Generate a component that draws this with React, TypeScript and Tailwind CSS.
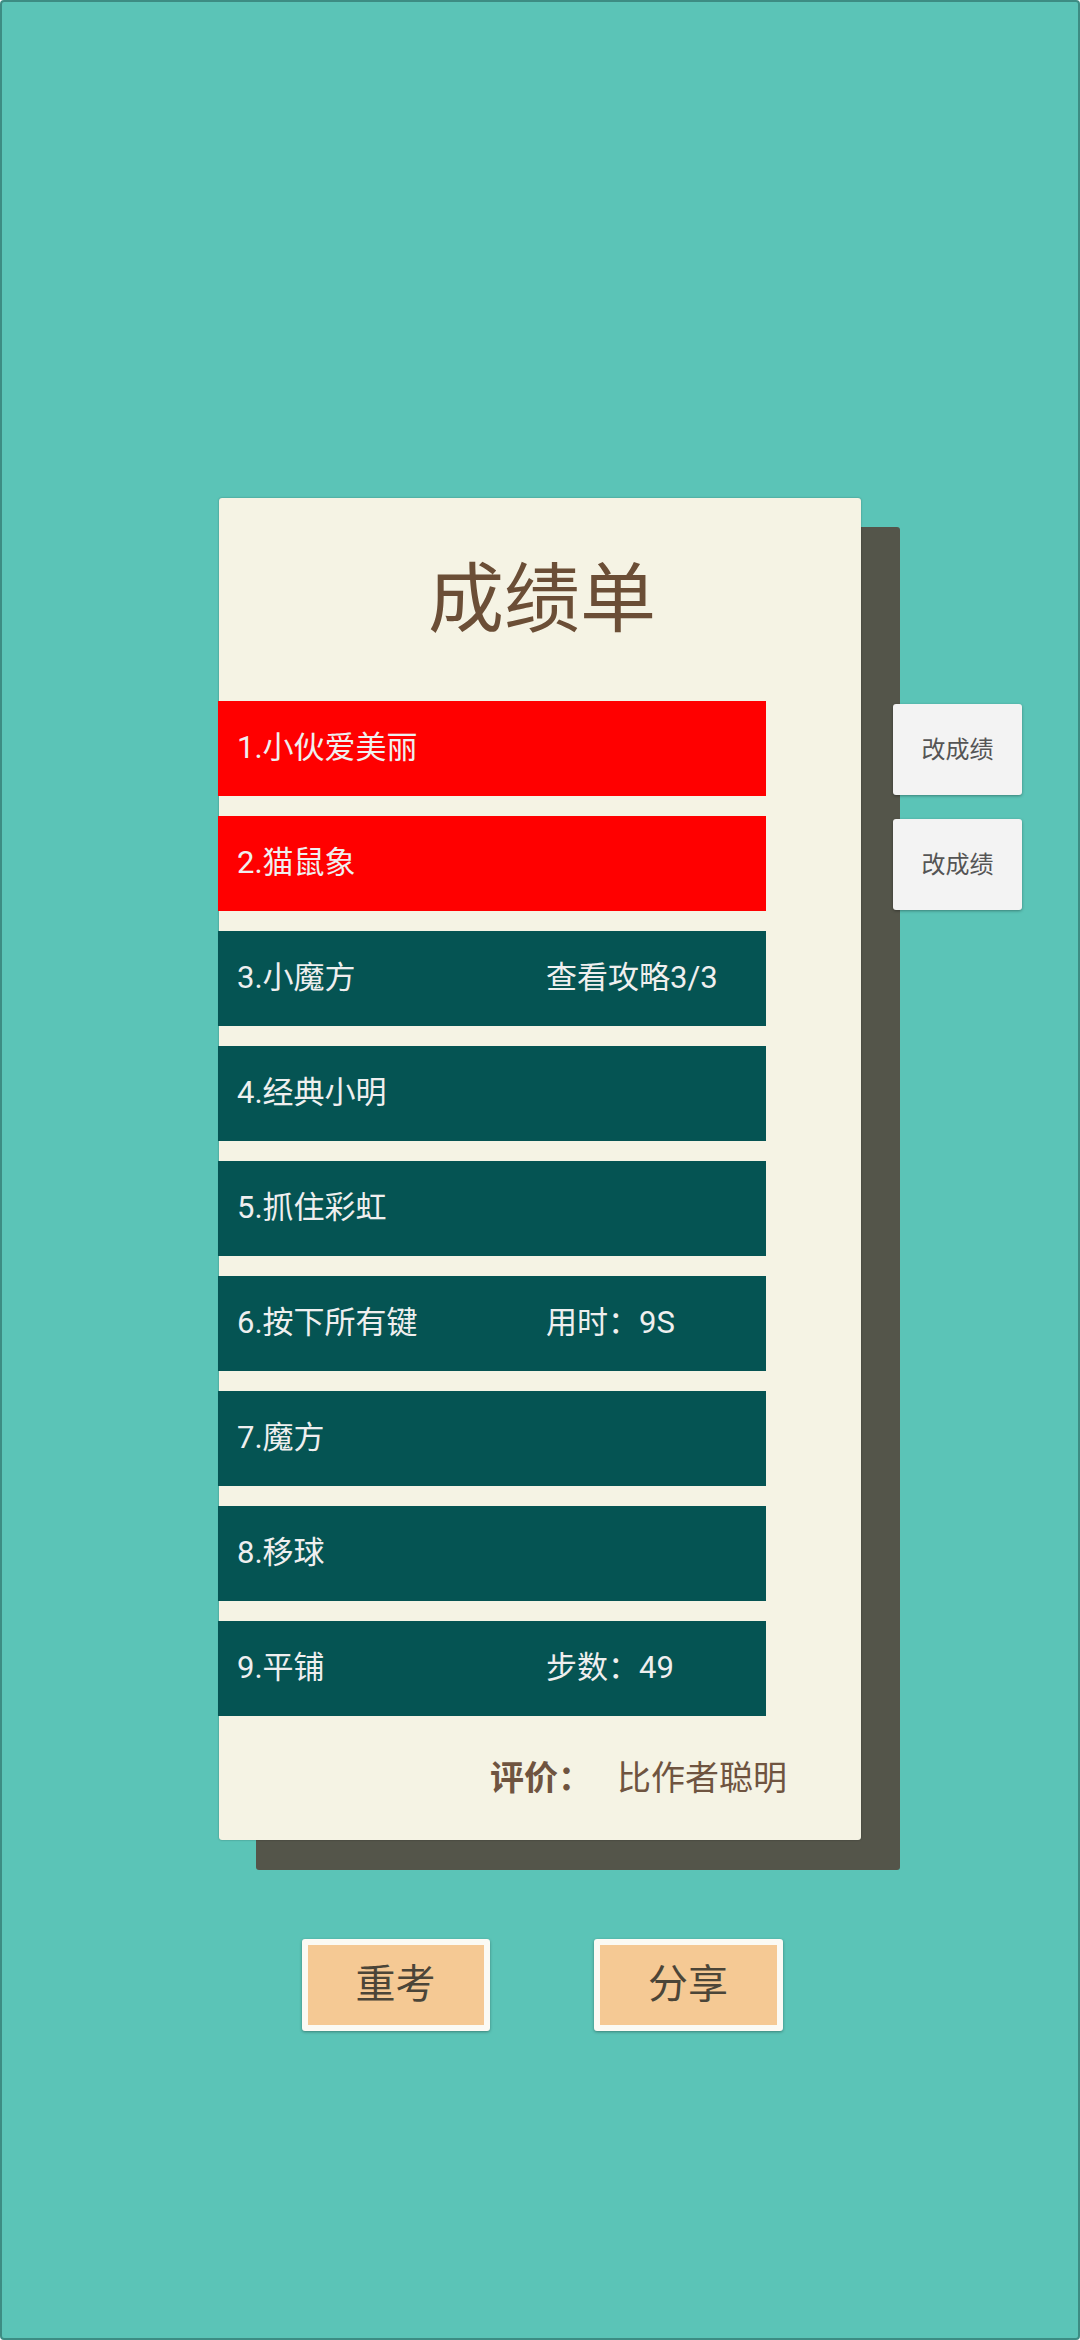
import React from 'react';

interface IRow {
  name: string;
  extra?: string;
  failed?: boolean;
}

const rows: IRow[] = [
  { name: '1.小伙爱美丽', failed: true },
  { name: '2.猫鼠象', failed: true },
  { name: '3.小魔方', extra: '查看攻略3/3' },
  { name: '4.经典小明' },
  { name: '5.抓住彩虹' },
  { name: '6.按下所有键', extra: '用时：9S' },
  { name: '7.魔方' },
  { name: '8.移球' },
  { name: '9.平铺', extra: '步数：49' },
];

const font = "font-['Roboto','Noto_Sans_CJK_SC',sans-serif]";

const ScoreRow: React.FC<IRow> = ({ name, extra, failed }) => {
  return (
    <div
      className={`flex h-[95px] w-[548px] -ml-[1px] items-center pl-[19px] text-[31px] text-[#efefef] ${
        failed ? 'bg-[#ff0000]' : 'bg-[#055453]'
      }`}
    >
      <span className="w-[309px]">{name}</span>
      {extra && <span>{extra}</span>}
    </div>
  );
};

const App: React.FC = () => {
  const failedCount = rows.filter((r) => r.failed).length;

  return (
    <div
      className={`h-[2340px] w-[1080px] overflow-hidden rounded-[4px] border-2 border-[#3d8c83] bg-[#5bc4b7] ${font}`}
    >
      <div className="flex flex-row pl-[217px] pt-[496px]">
        {/* card + shadow */}
        <div className="relative h-[1342px] w-[642px]">
          <div className="absolute left-[37px] top-[29px] h-[1343px] w-[644px] rounded-[3px] bg-[#54554a]"></div>
          <div className="relative flex h-full w-full flex-col rounded-[3px] bg-[#f5f3e4] shadow-[0_0_2px_rgba(0,0,0,0.35)]">
            <div className="flex h-[203px] items-center justify-center pl-[4px]">
              <h1 className="text-[76px] leading-none text-[#6b4e36]">成绩单</h1>
            </div>
            <div className="flex flex-col gap-[20px]">
              {rows.map((row) => (
                <ScoreRow key={row.name} {...row} />
              ))}
            </div>
            <div className="flex h-[124px] items-center pl-[271px] text-[34px] text-[#6f5440]">
              <span className="font-bold">评价：</span>
              <span className="ml-[25px]">比作者聪明</span>
            </div>
          </div>
        </div>

        {/* retry buttons */}
        <div className="relative ml-[32px] flex flex-col gap-[24px] pt-[206px]">
          {Array.from({ length: failedCount }).map((_, i) => (
            <button
              key={i}
              className="flex h-[91px] w-[129px] items-center justify-center rounded-[3px] bg-[#f3f3f3] text-[24px] text-[#555555] shadow-[0_1px_3px_rgba(0,0,0,0.35)]"
            >
              改成绩
            </button>
          ))}
        </div>
      </div>

      <div className="mt-[99px] flex flex-row justify-center gap-[104px] pl-[4px]">
        <button className="flex h-[92px] w-[188px] items-center justify-center rounded-[3px] border-[6px] border-[#fbfaf4] bg-[#f5c994] text-[40px] text-[#4b4538] shadow-[0_1px_3px_rgba(0,0,0,0.35)]">
          重考
        </button>
        <button className="flex h-[92px] w-[189px] items-center justify-center rounded-[3px] border-[6px] border-[#fbfaf4] bg-[#f5c994] text-[40px] text-[#4b4538] shadow-[0_1px_3px_rgba(0,0,0,0.35)]">
          分享
        </button>
      </div>
    </div>
  );
};

export default App;
